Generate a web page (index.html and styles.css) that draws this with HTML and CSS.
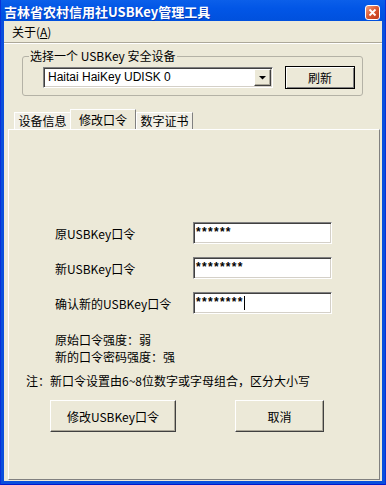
FILE: index.html
```html
<html>
	<head>
		<title>吉林省农村信用社USBKey管理工具</title>
		<meta charset="utf-8">
		<link rel="stylesheet" href="styles.css">
	</head>
	<body>
		<div class="window">
			<div class="titlebar">
				<span class="title">吉林省农村信用社USBKey管理工具</span>
				<span class="close">
					<svg width="11" height="11" viewBox="0 0 11 11"><path d="M2.5 2.5L8.5 8.5M8.5 2.5L2.5 8.5" stroke="#fff" stroke-width="1.8"/></svg>
				</span>
			</div>
			<div class="frame">
				<div class="menubar"><span>关于(<u>A</u>)</span></div>
				<div class="client">
					<fieldset class="group">
						<legend>选择一个 USBKey 安全设备</legend>
						<div class="combo">
							<span class="combo-text">Haitai HaiKey UDISK 0</span>
							<span class="combo-btn">
								<svg width="7" height="4" viewBox="0 0 7 4"><path d="M0 0H7L3.5 3.5Z" fill="#000"/></svg>
							</span>
						</div>
						<button class="btn btn-default">刷新</button>
					</fieldset>
					<div class="tabs">
						<span class="tab tab-first">设备信息</span>
						<span class="tab active">修改口令</span>
						<span class="tab tab-last">数字证书</span>
					</div>
					<div class="panel">
						<div class="form">
							<label>原USBKey口令</label>
							<div class="field">******</div>
							<label>新USBKey口令</label>
							<div class="field">********</div>
							<label>确认新的USBKey口令</label>
							<div class="field">********<span class="caret"></span></div>
						</div>
						<div class="strength">
							<p>原始口令强度：弱</p>
							<p>新的口令密码强度：强</p>
						</div>
						<p class="note">注：新口令设置由6~8位数字或字母组合，区分大小写</p>
						<div class="actions">
							<button class="btn btn-wide">修改USBKey口令</button>
							<button class="btn btn-cancel">取消</button>
						</div>
					</div>
				</div>
			</div>
		</div>
	</body>
</html>
```

FILE: styles.css
```css
body{
	margin: 0;
	font: 12px "Noto Sans CJK SC", sans-serif;
	color: #000;
}
.window{
	width: 386px;
	height: 485px;
	box-sizing: border-box;
	display: flex;
	flex-direction: column;
	background: #0A4FDC;
	border-left: 1px solid #0831D9;
	border-right: 1px solid #0831D9;
	border-bottom: 1px solid #0019CF;
}
.titlebar{
	height: 21px;
	flex: none;
	display: flex;
	justify-content: space-between;
	align-items: flex-start;
	padding: 0 5px 0 3px;
	background: linear-gradient(#0B5FEA, #0256E6 40%, #0050DD);
	color: #fff;
}
.title{
	font-weight: bold;
	font-size: 13px;
	line-height: 24px;
	text-shadow: 1px 1px 0 rgba(10, 24, 131, 0.4);
}
.close{
	width: 13px;
	height: 13px;
	margin-top: 5px;
	border: 1px solid #fff;
	border-radius: 3px;
	background: linear-gradient(135deg, #F3A283, #D9582F 50%, #C0391A);
	display: flex;
	align-items: center;
	justify-content: center;
}
.frame{
	flex: 1;
	margin: 0 3px 3px;
	background: #ECE9D8;
	display: flex;
	flex-direction: column;
}
.menubar{
	height: 22px;
	box-sizing: border-box;
	padding-left: 8px;
	line-height: 21px;
	border-bottom: 1px solid #ACA899;
}
.client{
	flex: 1;
	border-top: 1px solid #fff;
	display: flex;
	flex-direction: column;
}
.group{
	margin: 5px 0 0 18px;
	width: 341px;
	box-sizing: border-box;
	padding: 3px 0 6px 6px;
	border: 1px solid #B4B2A6;
	border-radius: 3px;
	display: flex;
	align-items: center;
}
.group legend{
	padding: 0 1px;
	line-height: 14px;
}
.combo{
	margin-left: 14px;
	width: 230px;
	height: 21px;
	box-sizing: border-box;
	display: flex;
	background: #fff;
	border: 1px solid;
	border-color: #808080 #fff #fff #808080;
	box-shadow: inset 1px 1px 0 #404040, inset -1px -1px 0 #D4D0C8;
}
.combo-text{
	flex: 1;
	padding-left: 4px;
	font: 12px "Liberation Sans", sans-serif;
	line-height: 19px;
}
.combo-btn{
	width: 17px;
	margin: 1px;
	box-sizing: border-box;
	background: #ECE9D8;
	border: 1px solid;
	border-color: #fff #404040 #404040 #fff;
	box-shadow: inset -1px -1px 0 #ACA899;
	display: flex;
	align-items: center;
	justify-content: center;
}
.btn{
	font: 12px "Noto Sans CJK SC", sans-serif;
	color: #000;
	background: #ECE9D8;
	border: 1px solid;
	border-color: #fff #404040 #404040 #fff;
	box-shadow: inset -1px -1px 0 #ACA899;
	padding: 0;
}
.btn-default{
	margin-left: 12px;
	width: 70px;
	height: 23px;
	border: 1px solid #000;
	box-shadow: inset 1px 1px 0 #fff, inset -1px -1px 0 #808080;
}
.tabs{
	display: flex;
	align-items: flex-end;
	height: 20px;
	margin: 13px 0 0 10px;
}
.tab{
	height: 17px;
	box-sizing: border-box;
	line-height: 16px;
	text-align: center;
	background: #F1EFE6;
	border-top: 1px solid #fff;
	border-left: 1px solid #fff;
	border-right: 1px solid #808080;
}
.tab-first{
	width: 56px;
	border-right: none;
}
.tab-last{
	width: 57px;
}
.tab.active{
	width: 66px;
	height: 21px;
	line-height: 20px;
	margin-bottom: -1px;
	background: #ECE9D8;
}
.panel{
	flex: 1;
	margin: 0 2px 1px 4px;
	padding-top: 92px;
	border-top: 1px solid #fff;
	border-left: 1px solid #fff;
	border-right: 1px solid #808080;
	border-bottom: 1px solid #808080;
}
.form{
	display: grid;
	grid-template-columns: 138px 139px;
	row-gap: 13px;
	align-items: center;
	margin-left: 46px;
}
.field{
	height: 22px;
	box-sizing: border-box;
	padding: 0 0 3px 2px;
	background: #fff;
	font: bold 12px "Liberation Sans", sans-serif;
	letter-spacing: 1.3px;
	color: #000;
	border: 1px solid;
	border-color: #808080 #fff #fff #808080;
	box-shadow: inset 1px 1px 0 #404040, inset -1px -1px 0 #D4D0C8;
	display: flex;
	align-items: center;
}
.caret{
	width: 1px;
	height: 14px;
	margin-top: 3px;
	background: #000;
}
.strength{
	margin: 17px 0 0 46px;
	line-height: 17px;
}
.strength p{
	margin: 0;
}
.note{
	margin: 7px 0 0 17px;
	line-height: 17px;
}
.actions{
	display: flex;
	gap: 59px;
	margin: 11px 0 0 41px;
}
.btn-wide{
	width: 126px;
	height: 32px;
}
.btn-cancel{
	width: 89px;
	height: 32px;
}
```
